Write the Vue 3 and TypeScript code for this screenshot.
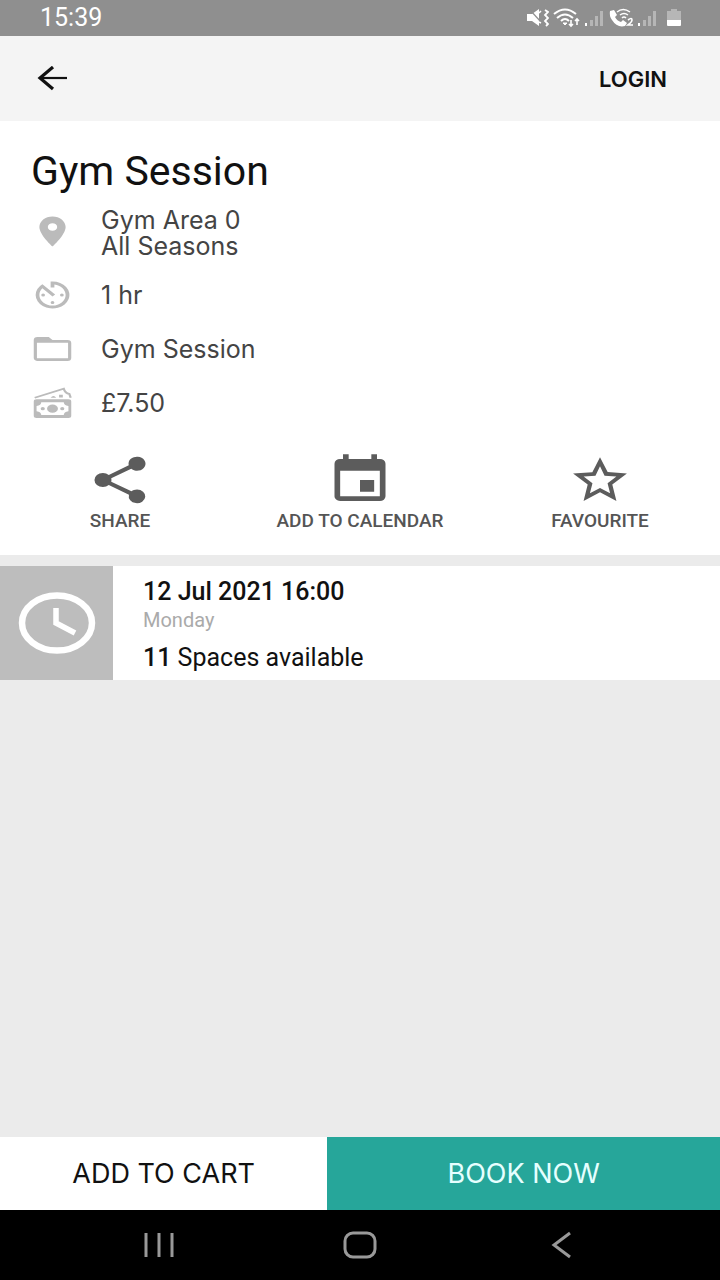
<script setup lang="ts">
import { ref } from 'vue'

type DetailIcon = 'place' | 'duration' | 'category' | 'price'

interface Detail {
  icon: DetailIcon
  text: string
}

const details: Detail[] = [
  { icon: 'place', text: 'Gym Area 0\nAll Seasons' },
  { icon: 'duration', text: '1 hr' },
  { icon: 'category', text: 'Gym Session' },
  { icon: 'price', text: '£7.50' },
]

const favourite = ref(false)
</script>

<template>
  <div class="screen">
    <div class="status">
      <span class="time">15:39</span>
      <div class="status-icons">
        <svg width="22" height="20" viewBox="0 0 22 20" fill="#fff">
          <path d="M0 6h5l7-5v17l-7-5H0z" />
          <path d="M3 2l11 12" stroke="#8f8f8f" stroke-width="1.2" />
          <path d="M12 5l2-2M12 14l2 1" stroke="#fff" stroke-width="1.5" />
          <path d="M18 2l3 2-3 3 3 3-3 3 3 3-2 2" fill="none" stroke="#fff" stroke-width="1.8" />
        </svg>
        <svg width="28" height="20" viewBox="0 0 28 20" fill="none" stroke="#fff" stroke-width="2">
          <path d="M1 6q11-9 22 0M4 10q8-7 16 0M8 13q4-4 8 0" />
          <path d="M10 15h4l-2 2z" fill="#fff" stroke-width="1" />
          <path d="M18 12v6M16 16l2 2 2-2M24 17v-6M22 13l2-2 2 2" stroke-width="1.6" />
        </svg>
        <svg width="20" height="20" viewBox="0 0 20 20" fill="#fff">
          <path d="M0 15h2v3H0z" />
          <path d="M5 12h3v6H5zM10 8h3v10h-3zM15 3h3v15h-3z" opacity=".35" />
        </svg>
        <svg width="25" height="20" viewBox="0 0 25 20">
          <path d="M1 3l4-1 3 5-2 2q2 4 6 5l2-2 4 3-2 3Q8 20 3 12 0 8 1 3z" fill="#fff" />
          <path d="M8 4q6-5 13 0M11 7q4-3 8 0M13 10q2-2 4 0" fill="none" stroke="#fff" stroke-width="1.5" />
          <path d="M19 12q4-3 4 0 0 2-4 5h5" fill="none" stroke="#fff" stroke-width="1.6" />
        </svg>
        <svg width="20" height="20" viewBox="0 0 20 20" fill="#fff">
          <path d="M0 15h2v3H0z" />
          <path d="M5 12h3v6H5zM10 8h3v10h-3zM15 3h3v15h-3z" opacity=".35" />
        </svg>
        <svg class="battery" width="16" height="20" viewBox="0 0 16 20" fill="#fff">
          <path d="M1 3h4V1h6v2h4v9H1z" opacity=".35" />
          <path d="M1 12h14v5q0 1-1 1H2q-1 0-1-1z" />
        </svg>
      </div>
    </div>

    <header class="app-bar">
      <button class="back" type="button" aria-label="Back">
        <svg width="32" height="26" viewBox="0 0 32 26" fill="none" stroke="#111">
          <path d="M30 12H3" stroke-width="2.2" />
          <path d="M16 1L3 12l13 11" stroke-width="3.2" />
        </svg>
      </button>
      <button class="login" type="button">LOGIN</button>
    </header>

    <main class="content">
      <section class="summary">
        <h1>Gym Session</h1>
        <ul class="details">
          <li v-for="detail in details" :key="detail.icon">
            <svg class="detail-icon" viewBox="0 0 24 24" preserveAspectRatio="none">
              <path
                v-if="detail.icon === 'place'"
                d="M12 1C8.130 1 5 4.130 5 8c0 5.250 7 13 7 13s7-7.750 7-13c0-3.870-3.130-7-7-7zm0 9.500a2.500 2.500 0 1 1 0-5 2.500 2.500 0 0 1 0 5z"
              />
              <path
                v-else-if="detail.icon === 'duration'"
                d="M11 17a1 1 0 1 0 2 0 1 1 0 1 0-2 0zm0-14v4h2V5.080c3.390.490 6 3.390 6 6.920a7 7 0 0 1-14 0c0-1.680.590-3.220 1.580-4.420L12 13l1.410-1.410-6.800-6.800v.020A9 9 0 1 0 12 3h-1zm7 9a1 1 0 1 0-2 0 1 1 0 1 0 2 0zM6 12a1 1 0 1 0 2 0 1 1 0 1 0-2 0z"
              />
              <path
                v-else-if="detail.icon === 'category'"
                fill-rule="evenodd"
                d="M20 6h-8l-2-2H4a2 2 0 0 0-2 2v12c0 1.100.900 2 2 2h16a2 2 0 0 0 2-2V8a2 2 0 0 0-2-2zm.300 12.200H3.700V7.900h16.600z"
              />
              <template v-else>
                <path
                  fill-rule="evenodd"
                  d="M3.500 9.500h17Q22 9.500 22 11v9.500q0 1.500-1.500 1.500h-17Q2 22 2 20.500V11q0-1.500 1.500-1.500zM6 11.500q0 2-2.500 2.500v3.500Q6 18 6 20h12q0-2 2.500-2.500V14Q18 13.500 18 11.500z"
                />
                <ellipse cx="12" cy="15.750" rx="2.900" ry="2.700" />
                <circle cx="6.800" cy="15.750" r="1.100" />
                <circle cx="17.200" cy="15.750" r="1.100" />
                <path d="M2.500 8.500L18 2.500q.700 3 3 3.500l.700 2.500" fill="none" stroke="#bbb" stroke-width="1.200" />
                <path d="M11 8.500q1.500-2.500 3 0zM15.500 6.500h2v1.800h-2z" />
              </template>
            </svg>
            <span class="detail-text">{{ detail.text }}</span>
          </li>
        </ul>

        <div class="actions">
          <button type="button">
            <svg class="action-icon" viewBox="0 0 24 24" preserveAspectRatio="none">
              <path d="M18 16.080c-.760 0-1.440.300-1.960.770L8.910 12.700a3.300 3.300 0 0 0 0-1.400l7.050-4.110A3 3 0 1 0 15.090 5.700L8.040 9.810a3 3 0 1 0 0 4.380l7.120 4.160a2.920 2.920 0 1 0 2.840-2.270z" />
            </svg>
            SHARE
          </button>
          <button type="button">
            <svg class="action-icon" viewBox="0 0 24 24" preserveAspectRatio="none">
              <path d="M17 12h-5v5h5v-5zM16 1v2H8V1H6v2H5a2 2 0 0 0-2 2v14c0 1.100.900 2 2 2h14a2 2 0 0 0 2-2V5a2 2 0 0 0-2-2h-1V1h-2zm3 18H5V8h14v11z" />
            </svg>
            ADD TO CALENDAR
          </button>
          <button type="button" :aria-pressed="favourite" @click="favourite = !favourite">
            <svg class="action-icon" viewBox="0 0 24 24" preserveAspectRatio="none">
              <path
                :fill-rule="favourite ? 'nonzero' : 'evenodd'"
                d="M21.500 9.240l-6.800-.620L12 2.200 9.300 8.630l-6.800.610 5.160 4.730L6.200 21 12 17.270 17.800 21l-1.460-7.030 5.160-4.730zM12 15.400l-3.560 2.270.900-4.280-3.120-2.880 4.180-.380L12 6.100l1.610 4.040 4.180.380-3.120 2.880.900 4.280z"
              />
            </svg>
            FAVOURITE
          </button>
        </div>
      </section>

      <article class="slot">
        <div class="slot-tile">
          <svg width="78" height="62" viewBox="0 0 78 62" fill="none" stroke="#fff">
            <ellipse cx="39" cy="31" rx="35" ry="27.500" stroke-width="6.500" />
            <path d="M38 16v15l19 10" stroke-width="5.500" />
          </svg>
        </div>
        <div class="slot-text">
          <strong class="slot-date">12 Jul 2021 16:00</strong>
          <span class="slot-day">Monday</span>
          <span class="slot-spaces"><strong>11</strong> Spaces available</span>
        </div>
      </article>
    </main>

    <footer class="checkout">
      <button class="cart" type="button">ADD TO CART</button>
      <button class="book" type="button">BOOK NOW</button>
    </footer>

    <nav class="system-nav">
      <button type="button" aria-label="Recent apps">
        <svg width="34" height="28" viewBox="0 0 34 28" stroke="#999" stroke-width="3">
          <path d="M4 2v24M17 2v24M30 2v24" />
        </svg>
      </button>
      <button type="button" aria-label="Home">
        <svg width="34" height="28" viewBox="0 0 34 28" fill="none" stroke="#999" stroke-width="3">
          <rect x="2" y="2" width="30" height="24" rx="8" />
        </svg>
      </button>
      <button type="button" aria-label="Back">
        <svg width="34" height="28" viewBox="0 0 34 28" fill="none" stroke="#999" stroke-width="3">
          <path d="M26 2L10 14l16 12" />
        </svg>
      </button>
    </nav>
  </div>
</template>

<style>
body {
  margin: 0;
}
</style>

<style scoped>
.screen {
  display: flex;
  flex-direction: column;
  min-height: 100vh;
  background: #ebebeb;
  color: #111;
  font-family: Roboto, "Liberation Sans", sans-serif;
}

button {
  border: 0;
  padding: 0;
  background: none;
  color: inherit;
  font: inherit;
  cursor: pointer;
}

svg {
  display: block;
}

.login,
.detail-text,
.checkout {
  font-family: Inter, Roboto, sans-serif;
}

.status {
  display: flex;
  align-items: center;
  justify-content: space-between;
  height: 36px;
  padding: 0 38px 0 40px;
  background: #8f8f8f;
  color: #fff;
}

.time {
  font-size: 25px;
  line-height: 36px;
}

.status-icons {
  display: flex;
  gap: 4px;
}

.battery {
  margin-left: 4px;
}

.app-bar {
  display: flex;
  align-items: center;
  justify-content: space-between;
  height: 85px;
  padding: 0 53px 0 37px;
  background: #f4f4f4;
}

.login {
  font-size: 22px;
  font-weight: 600;
}

.content {
  flex: 1;
}

.summary {
  padding: 26px 0 22px;
  background: #fff;
}

h1 {
  margin: 0;
  padding: 0 31px;
  font-size: 41px;
  line-height: 48px;
  font-weight: 400;
}

.details {
  display: flex;
  flex-direction: column;
  gap: 18px;
  margin: 12px 0 0;
  padding: 0 30px;
  list-style: none;
}

.details li {
  display: flex;
  align-items: center;
  gap: 26px;
}

.detail-icon {
  flex: none;
  width: 45px;
  height: 36px;
  fill: #bbb;
}

.detail-text {
  color: #444;
  font-size: 25px;
  line-height: 26px;
  white-space: pre-line;
}

.actions {
  display: grid;
  grid-template-columns: repeat(3, 1fr);
  margin-top: 31px;
}

.actions button {
  display: flex;
  flex-direction: column;
  align-items: center;
  gap: 1px;
  color: #555;
  font-size: 19px;
  line-height: 24px;
  font-weight: 500;
}

.action-icon {
  width: 68px;
  height: 56px;
  fill: #5c5c5c;
}

.slot {
  display: flex;
  margin-top: 11px;
  background: #fff;
}

.slot-tile {
  display: flex;
  align-items: center;
  justify-content: center;
  width: 113px;
  background: #bdbdbd;
}

.slot-text {
  display: flex;
  flex-direction: column;
  padding: 11px 30px 7px;
}

.slot-date {
  font-size: 25px;
  line-height: 30px;
  font-weight: 500;
}

.slot-day {
  color: #aaa;
  font-size: 20px;
  line-height: 26px;
}

.slot-spaces {
  margin-top: 10px;
  font-size: 25px;
  line-height: 30px;
}

.slot-spaces strong {
  font-weight: 500;
}

.checkout {
  display: flex;
  height: 73px;
  font-size: 27px;
}

.cart {
  flex: 5;
  background: #fff;
}

.book {
  flex: 6;
  background: #26a69a;
  color: #e6ffff;
}

.system-nav {
  display: flex;
  height: 70px;
  padding: 0 59px;
  background: #000;
}

.system-nav button {
  display: flex;
  flex: 1;
  align-items: center;
  justify-content: center;
}
</style>
